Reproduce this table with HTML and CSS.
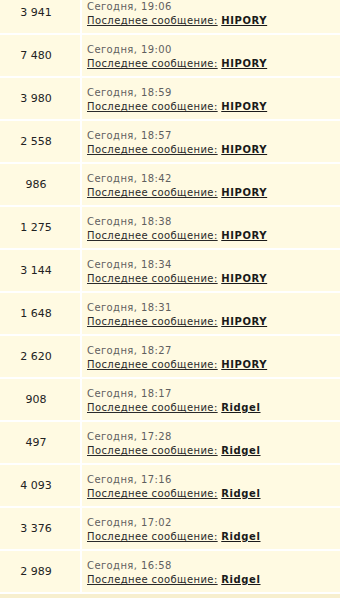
FILE: index.html
```html
<!DOCTYPE html>
<html lang="ru">
<head>
<meta charset="utf-8">
<link rel="stylesheet" href="styles.css">
</head>
<body>
<table class="topics">
<tbody>
<tr><td class="count">3 941</td><td class="info"><div class="time">Сегодня, 19:06</div><div class="last"><span class="label">Последнее сообщение:</span> <a class="user">HIPORY</a></div></td></tr>
<tr><td class="count">7 480</td><td class="info"><div class="time">Сегодня, 19:00</div><div class="last"><span class="label">Последнее сообщение:</span> <a class="user">HIPORY</a></div></td></tr>
<tr><td class="count">3 980</td><td class="info"><div class="time">Сегодня, 18:59</div><div class="last"><span class="label">Последнее сообщение:</span> <a class="user">HIPORY</a></div></td></tr>
<tr><td class="count">2 558</td><td class="info"><div class="time">Сегодня, 18:57</div><div class="last"><span class="label">Последнее сообщение:</span> <a class="user">HIPORY</a></div></td></tr>
<tr><td class="count">986</td><td class="info"><div class="time">Сегодня, 18:42</div><div class="last"><span class="label">Последнее сообщение:</span> <a class="user">HIPORY</a></div></td></tr>
<tr><td class="count">1 275</td><td class="info"><div class="time">Сегодня, 18:38</div><div class="last"><span class="label">Последнее сообщение:</span> <a class="user">HIPORY</a></div></td></tr>
<tr><td class="count">3 144</td><td class="info"><div class="time">Сегодня, 18:34</div><div class="last"><span class="label">Последнее сообщение:</span> <a class="user">HIPORY</a></div></td></tr>
<tr><td class="count">1 648</td><td class="info"><div class="time">Сегодня, 18:31</div><div class="last"><span class="label">Последнее сообщение:</span> <a class="user">HIPORY</a></div></td></tr>
<tr><td class="count">2 620</td><td class="info"><div class="time">Сегодня, 18:27</div><div class="last"><span class="label">Последнее сообщение:</span> <a class="user">HIPORY</a></div></td></tr>
<tr><td class="count">908</td><td class="info"><div class="time">Сегодня, 18:17</div><div class="last"><span class="label">Последнее сообщение:</span> <a class="user">Ridgel</a></div></td></tr>
<tr><td class="count">497</td><td class="info"><div class="time">Сегодня, 17:28</div><div class="last"><span class="label">Последнее сообщение:</span> <a class="user">Ridgel</a></div></td></tr>
<tr><td class="count">4 093</td><td class="info"><div class="time">Сегодня, 17:16</div><div class="last"><span class="label">Последнее сообщение:</span> <a class="user">Ridgel</a></div></td></tr>
<tr><td class="count">3 376</td><td class="info"><div class="time">Сегодня, 17:02</div><div class="last"><span class="label">Последнее сообщение:</span> <a class="user">Ridgel</a></div></td></tr>
<tr><td class="count">2 989</td><td class="info"><div class="time">Сегодня, 16:58</div><div class="last"><span class="label">Последнее сообщение:</span> <a class="user">Ridgel</a></div></td></tr>
</tbody>
</table>
</body>
</html>
```
FILE: styles.css
```css
html, body {
  margin: 0;
  padding: 0;
}
body {
  background: #f7efcf;
  font-family: "DejaVu Sans", Verdana, sans-serif;
  overflow: hidden;
}
.topics {
  border-collapse: separate;
  border-spacing: 2px;
  background: #ffffff;
  margin-top: -10px;
  margin-left: -2px;
  width: calc(100% + 4px);
}
.topics td {
  background: #fffae2;
  vertical-align: middle;
}
.count {
  width: 72px;
  padding: 0 8px 0 0;
  text-align: center;
  font-size: 11px;
  color: #222222;
}
.info {
  padding: 8px 5px 5px 5px;
  height: 28px;
  letter-spacing: 0.4px;
}
.time {
  font-size: 10px;
  line-height: 14px;
  color: #5f5f5f;
  white-space: nowrap;
}
.last {
  font-size: 10px;
  line-height: 14px;
  white-space: nowrap;
  color: #2a2a2a;
}
.label {
  text-decoration: underline;
  color: #2a2a2a;
}
.user {
  font-weight: bold;
  text-decoration: underline;
  color: #1a1a1a;
  letter-spacing: 0.6px;
}
```
